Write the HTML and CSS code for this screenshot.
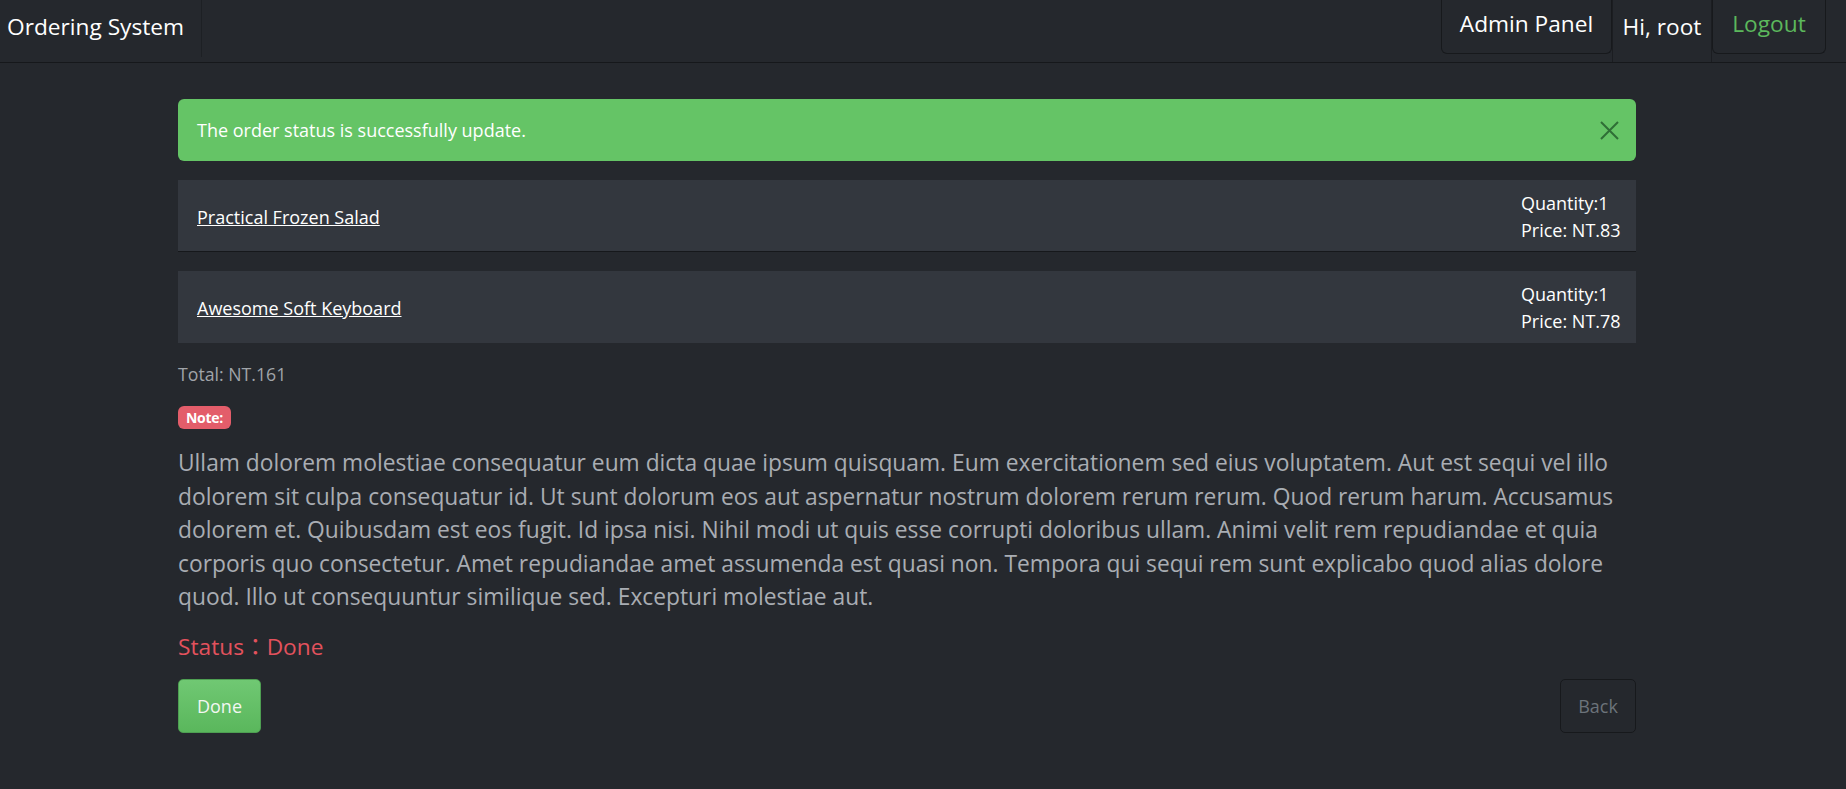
FILE: index.html
```html
<!DOCTYPE html>
<html>
<head>
<meta charset="utf-8">
<link rel="stylesheet" href="styles.css">
</head>
<body>
<nav class="navbar">
  <div class="brand">Ordering System</div>
  <ul class="nav-right">
    <li class="nav-item nav-box nav-admin">Admin Panel</li>
    <li class="nav-item nav-text">Hi, root</li>
    <li class="nav-item nav-box nav-logout">Logout</li>
  </ul>
</nav>
<main class="container">
  <div class="alert">
    <span>The order status is successfully update.</span>
    <svg class="close" width="19" height="19" viewBox="0 0 19 19"><path d="M1 1L18 18M18 1L1 18" stroke="#2f6e36" stroke-width="2" fill="none"/></svg>
  </div>
  <div class="item">
    <a class="item-name">Practical Frozen Salad</a>
    <div class="item-info"><div>Quantity:1</div><div>Price: NT.83</div></div>
  </div>
  <div class="item">
    <a class="item-name">Awesome Soft Keyboard</a>
    <div class="item-info"><div>Quantity:1</div><div>Price: NT.78</div></div>
  </div>
  <p class="total">Total: NT.161</p>
  <div class="badge-row"><span class="badge">Note:</span></div>
  <p class="note">Ullam dolorem molestiae consequatur eum dicta quae ipsum quisquam. Eum exercitationem sed eius voluptatem. Aut est sequi vel illo dolorem sit culpa consequatur id. Ut sunt dolorum eos aut aspernatur nostrum dolorem rerum rerum. Quod rerum harum. Accusamus dolorem et. Quibusdam est eos fugit. Id ipsa nisi. Nihil modi ut quis esse corrupti doloribus ullam. Animi velit rem repudiandae et quia corporis quo consectetur. Amet repudiandae amet assumenda est quasi non. Tempora qui sequi rem sunt explicabo quod alias dolore quod. Illo ut consequuntur similique sed. Excepturi molestiae aut.</p>
  <p class="status">Status：Done</p>
  <div class="actions">
    <button class="btn btn-done">Done</button>
    <button class="btn btn-back">Back</button>
  </div>
</main>
</body>
</html>
```

FILE: styles.css
```css
* { box-sizing: border-box; }
html, body { margin: 0; padding: 0; }
body {
  background: #25282d;
  font-family: "Open Sans", "Noto Sans", "Noto Sans CJK TC", sans-serif;
  color: #fff;
  min-height: 789px;
}
.navbar {
  display: flex;
  justify-content: space-between;
  align-items: flex-start;
  height: 63px;
  border-bottom: 1px solid #16181b;
}
.brand {
  height: 57px;
  padding: 11px 17px 0 7px;
  font-size: 22.7px;
  line-height: 31px;
  border-right: 1px solid #1d2024;
}
.nav-right {
  list-style: none;
  margin: 0;
  padding: 0 20px 0 0;
  display: flex;
  align-items: flex-start;
}
.nav-item {
  font-size: 22.7px;
  line-height: 31px;
  text-align: center;
  white-space: nowrap;
}
.nav-box {
  height: 54px;
  padding-top: 8px;
  border: 1px solid #17191c;
  border-top: none;
  border-radius: 0 0 6px 6px;
}
.nav-admin { width: 171px; }
.nav-text {
  width: 100px;
  height: 62px;
  padding-top: 11px;
  border-left: 1px solid #1b1d21;
  border-right: 1px solid #1b1d21;
}
.nav-logout { width: 114px; color: #5cb85c; }

.container {
  margin-left: 178px;
  width: 1458px;
  padding-top: 36px;
}
.alert {
  background: #65c466;
  border-radius: 6px;
  height: 62px;
  display: flex;
  align-items: center;
  justify-content: space-between;
  padding: 0 17px 0 19px;
  font-size: 18px;
  margin-bottom: 19px;
}
.close { margin-top: 1px; }
.item {
  background: #33373e;
  height: 72px;
  display: flex;
  justify-content: space-between;
  align-items: center;
  padding: 0 17px 0 19px;
  border-bottom: 1px solid #16181b;
  margin-bottom: 19px;
}
.item + .item { border-bottom: none; margin-bottom: 0; }
.item-name {
  color: #fff;
  text-decoration: underline;
  font-size: 18px;
  padding-top: 2px;
}
.item-info {
  font-size: 18px;
  line-height: 27px;
  width: 98px;
  white-space: nowrap;
  padding-top: 2px;
}
.total {
  margin: 19px 0 0;
  color: #a0a4a9;
  font-size: 17.7px;
  line-height: 24px;
}
.badge-row {
  display: flex;
  margin-top: 20px;
}
.badge {
  background: #e35d6a;
  color: #fff;
  font-size: 14px;
  font-weight: 700;
  letter-spacing: -0.3px;
  border-radius: 6px;
  height: 23px;
  line-height: 23px;
  padding: 0 8px;
}
.note {
  margin: 17px 0 0;
  color: #a9adb3;
  font-size: 22.8px;
  line-height: 33.5px;
}
.status {
  margin: 18px 0 0;
  color: #e3525d;
  font-size: 22.7px;
  line-height: 30px;
}
.actions {
  display: flex;
  justify-content: space-between;
  margin-top: 17px;
}
.btn {
  font-family: inherit;
  font-size: 18px;
  height: 54px;
  border-radius: 5px;
  cursor: pointer;
}
.btn-done {
  width: 83px;
  background: linear-gradient(#70c873, #5ab75c);
  border: 1px solid #4e9f52;
  color: #f2f7f2;
}
.btn-back {
  width: 76px;
  background: transparent;
  border: 1px solid #17191c;
  color: #6c737a;
}
```
